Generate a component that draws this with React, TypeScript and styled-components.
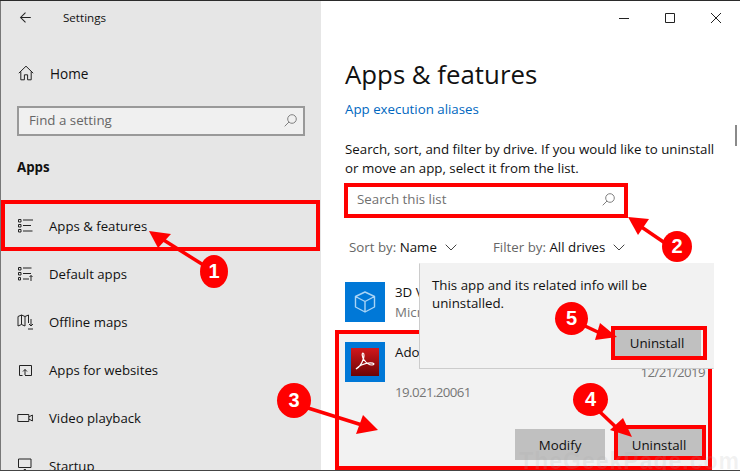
import styled, { createGlobalStyle } from 'styled-components'

const GlobalStyle = createGlobalStyle`
    html, body {
        margin: 0;
        padding: 0;
        background: #fff;
    }
    body {
        font-family: "Open Sans", "Noto Sans", "Liberation Sans", sans-serif;
        color: #111;
    }
`

const Window = styled.div`
    position: relative;
    display: flex;
    width: 740px;
    height: 471px;
    box-sizing: border-box;
    overflow: hidden;
    background: #fff;
    border-top: 1px solid #2b2b2b;
    border-bottom: 1px solid #444;
`

const Sidebar = styled.aside`
    width: 321px;
    flex-shrink: 0;
    box-sizing: border-box;
    border-left: 1px solid #777;
    background: #e6e6e6;
    display: flex;
    flex-direction: column;
    & > * {
        flex-shrink: 0;
    }
`

const SideHeader = styled.div`
    display: flex;
    align-items: center;
    height: 33px;
    padding-left: 18px;
    gap: 31px;
    font-size: 11.6px;
`

const HomeRow = styled.div`
    display: flex;
    align-items: center;
    gap: 16px;
    height: 48px;
    margin-top: 15px;
    padding-left: 17px;
    font-size: 13.6px;
`

const FindBox = styled.div`
    display: flex;
    align-items: center;
    justify-content: space-between;
    box-sizing: border-box;
    height: 30px;
    width: 288px;
    margin: 9px 0 0 16px;
    padding: 0 6px 2px 10px;
    border: 2px solid #999;
    background: #f0f0f0;
    color: #666;
    font-size: 13.3px;
`

const SectionTitle = styled.div`
    height: 30px;
    line-height: 30px;
    margin: 16px 0 20px 16px;
    font-size: 13.3px;
    font-weight: 700;
`

const NavRow = styled.div<{ $active?: boolean }>`
    position: relative;
    display: flex;
    align-items: center;
    gap: 16px;
    height: 48px;
    padding-left: 16px;
    font-size: 13.2px;
    &::before {
        content: "";
        display: ${p => (p.$active ? 'block' : 'none')};
        position: absolute;
        left: 0;
        top: 10px;
        width: 4px;
        height: 25px;
        background: #0078d7;
    }
`

const Main = styled.main`
    flex: 1;
    display: flex;
    flex-direction: column;
    padding-left: 24px;
    min-width: 0;
`

const WindowControls = styled.div`
    display: flex;
    justify-content: flex-end;
    height: 33px;
    margin-left: -24px;
    padding-right: 1px;
`

const ControlButton = styled.div`
    width: 46px;
    display: flex;
    align-items: center;
    justify-content: center;
`

const Heading = styled.h1`
    margin: 20px 0 0;
    height: 40px;
    line-height: 40px;
    font-size: 25.8px;
    font-weight: 400;
    color: #111;
`

const AliasLink = styled.div`
    margin-top: 5px;
    height: 20px;
    line-height: 20px;
    font-size: 13.3px;
    color: #0067c0;
`

const Description = styled.p`
    margin: 21px 0 0;
    width: 380px;
    line-height: 19px;
    font-size: 13.3px;
`

const SearchField = styled.div`
    display: flex;
    align-items: center;
    justify-content: space-between;
    box-sizing: border-box;
    width: 281px;
    height: 32px;
    margin-top: 7px;
    padding: 0 9px 4px 10px;
    border: 2px solid #999;
    color: #707070;
    font-size: 13.3px;
`

const SortRow = styled.div`
    display: flex;
    align-items: center;
    height: 20px;
    margin-top: 20px;
    padding-left: 4px;
    font-size: 13.3px;
`

const SortControl = styled.div<{ $width: number }>`
    display: flex;
    align-items: center;
    gap: 8px;
    width: ${p => p.$width}px;
`

const SortLabel = styled.span`
    color: #666;
`

const AppRow = styled.div`
    display: flex;
    gap: 10px;
    height: 40px;
    margin-top: 25px;
    padding-bottom: 10px;
`

const AppIcon = styled.div`
    width: 40px;
    height: 40px;
    flex-shrink: 0;
    background: #0078d7;
    display: flex;
    align-items: center;
    justify-content: center;
`

const AppText = styled.div`
    display: flex;
    flex-direction: column;
    flex: 1;
    font-size: 13.3px;
    line-height: 20px;
`

const AppMuted = styled.div`
    color: #767676;
`

const SelectedRow = styled.div`
    display: flex;
    flex-direction: column;
    box-sizing: border-box;
    width: 370px;
    height: 135px;
    margin-left: -7px;
    padding: 10px 5px 0 7px;
    background: #f2f2f2;
`

const SelectedTop = styled.div`
    display: flex;
    gap: 10px;
    height: 60px;
`

const Version = styled(AppMuted)`
    margin-top: 20px;
    letter-spacing: -0.6px;
`

const DateText = styled(AppMuted)`
    margin: 20px -2px 0 0;
    font-size: 13.3px;
    line-height: 20px;
    letter-spacing: -0.6px;
`

const ButtonRow = styled.div`
    display: flex;
    justify-content: flex-end;
    gap: 10px;
    margin-top: 27px;
`

const GrayButton = styled.div<{ $width: number }>`
    display: flex;
    align-items: center;
    justify-content: center;
    width: ${p => p.$width}px;
    height: 31px;
    background: #c0c0c0;
    font-size: 13.3px;
`

const Flyout = styled.div`
    position: absolute;
    left: 419px;
    top: 262px;
    width: 295px;
    height: 106px;
    box-sizing: border-box;
    padding: 12px 12px 0 12px;
    background: #f2f2f2;
    border: 1px solid #ccc;
    border-top-color: #f2f2f2;
    border-right-color: #f2f2f2;
    font-size: 13.3px;
    line-height: 18px;
    display: flex;
    flex-direction: column;
`

const FlyoutButton = styled(GrayButton)`
    height: 27px;
    align-self: flex-end;
    margin: 17px 0 0 0;
`

const Scrollbar = styled.div`
    position: absolute;
    right: 3px;
    top: 124px;
    width: 2px;
    height: 21px;
    background: #8a8a8a;
`

const RedFrame = styled.div<{ $x: number; $y: number; $w: number; $h: number; $t?: number }>`
    position: absolute;
    left: ${p => p.$x}px;
    top: ${p => p.$y - 1}px;
    width: ${p => p.$w}px;
    height: ${p => p.$h}px;
    box-sizing: border-box;
    border: ${p => p.$t ?? 4}px solid #f00;
`

const ArrowLayer = styled.svg`
    position: absolute;
    left: 0;
    top: -1px;
    width: 740px;
    height: 471px;
    pointer-events: none;
`

const Badge = styled.div<{ $x: number; $y: number; $w: number; $h: number }>`
    position: absolute;
    left: ${p => p.$x - p.$w / 2}px;
    top: ${p => p.$y - p.$h / 2 - 1}px;
    width: ${p => p.$w}px;
    height: ${p => p.$h}px;
    border-radius: 50%;
    background: #f00;
    color: #fff;
    display: flex;
    align-items: center;
    justify-content: center;
    font-family: "Liberation Sans", sans-serif;
    font-size: 20px;
    font-weight: 700;
`

const Watermark = styled.div`
    position: absolute;
    right: 0;
    bottom: -5px;
    font-family: "Liberation Sans", sans-serif;
    font-size: 23px;
    font-weight: 700;
    letter-spacing: 1px;
    color: rgba(170, 170, 170, 0.16);
    white-space: nowrap;
`

type IconProps = { children: React.ReactNode; size?: number }

function Glyph({ children, size = 16 }: IconProps) {
    return (
        <svg width={size} height={size} viewBox="0 0 16 16" fill="none" stroke="#222" strokeWidth="1" style={{ flexShrink: 0 }}>
            {children}
        </svg>
    )
}

const BackIcon = () => (
    <Glyph size={13}>
        <path d="M14.5 8H2M8 2 2 8l6 6" strokeWidth="1.3" />
    </Glyph>
)

const HomeIcon = () => (
    <Glyph>
        <path d="M.8 8.200 8 1.200l7.200 7M2.800 6.500v8.300h3.600v-5h3.200v5h3.600V6.500" />
    </Glyph>
)

const SearchIcon = () => (
    <svg width="13" height="13" viewBox="0 0 13 13" fill="none" stroke="#808080" strokeWidth="1">
        <circle cx="8" cy="5" r="4.300" />
        <path d="M5 8 .7 12.300" />
    </svg>
)

const ListIcon = () => (
    <Glyph>
        <path d="M1.500 1.500h2.500V4H1.500zM1.500 6.500h2.500V9H1.500zM1.500 11.500h2.500V14H1.500zM6 2h10.500M6 7.500h8M6 13h9.500" />
    </Glyph>
)

const DefaultAppsIcon = () => (
    <Glyph>
        <path d="M1.500 1.500h2.500V4H1.500zM1.500 6.500h2.500V9H1.500zM1.500 11.500h2V14h-2zM6 2h8.500M6 7.500h8M6 13h6M14 15V9.500M12.500 11l1.500-1.500 1.500 1.500" />
    </Glyph>
)

const MapIcon = () => (
    <Glyph>
        <path d="M1 2.500 4.500 1 8 2.500 11.500 1v8M1 2.500v9.500l3.500-1.500L8 12M4.500 1v9.500M8 2.500V12M14 5v7M12 10l2 2 2-2M11 15h5" />
    </Glyph>
)

const WebsiteIcon = () => (
    <Glyph>
        <path d="M5.500 13.500H2.500v-10h12v10H8M8 13V7.500M6 9.500l2-2 2 2" />
    </Glyph>
)

const VideoIcon = () => (
    <Glyph>
        <path d="M.8 4.500h11v7h-11zM11.800 7l3.600-2v6l-3.600-2" />
    </Glyph>
)

const StartupIcon = () => (
    <Glyph>
        <path d="M1.500 1h12.500v8.500H1.500zM7.800 15V11M5.800 13l2-2 2 2M4 15.500h7.500" />
    </Glyph>
)

const ChevronIcon = () => (
    <svg width="12" height="7" viewBox="0 0 12 7" fill="none" stroke="#444" strokeWidth="1">
        <path d="M.7.700 6 6l5.300-5.300" />
    </svg>
)

const CubeIcon = () => (
    <svg width="24" height="24" viewBox="0 0 24 24" fill="none" stroke="#a9d4f5" strokeWidth="1.4" strokeLinejoin="round">
        <path d="M12 2 21.500 6.500V17L12 22 2.500 17V6.500zM2.500 6.500 12 11.500l9.500-5M12 11.500V22" />
    </svg>
)

const AcrobatIcon = () => (
    <svg width="30" height="30" viewBox="0 0 30 30">
        <defs>
            <linearGradient id="acrobat" x1="0" y1="0" x2="0" y2="1">
                <stop offset="0" stopColor="#d2181c" />
                <stop offset="1" stopColor="#6b0405" />
            </linearGradient>
        </defs>
        <rect x="1" y="1" width="28" height="28" fill="url(#acrobat)" />
        <path
            d="M6 22c3-1.500 6-6 7.500-10.500.6-2 .8-5.500-.5-5.500s-1 3.500.8 6.500c2 3 5 5.500 8.200 5.500 2 0 2.500-1.300 1-1.800-3-.8-8 .3-11.500 1.800-2 .8-4.500 3-5.500 4z"
            fill="none"
            stroke="#fff"
            strokeWidth="1.200"
        />
    </svg>
)

const arrows = [
    { line: '205,266 162,239', head: '149,231 171,234 158,248' },
    { line: '665,243 640,226', head: '628,217 649,219 638,235' },
    { line: '308,408 362,425', head: '378,430 363,415 356,434' },
    { line: '600,412 620,431', head: '632,437 610,430 623,418' },
    { line: '585,326 602,334', head: '617,337 600,323 595,340' },
]

export default function App() {
    return (
        <>
            <GlobalStyle />
            <Window>
                <Sidebar>
                    <SideHeader>
                        <BackIcon />
                        <span>Settings</span>
                    </SideHeader>
                    <HomeRow>
                        <HomeIcon />
                        <span>Home</span>
                    </HomeRow>
                    <FindBox>
                        <span>Find a setting</span>
                        <SearchIcon />
                    </FindBox>
                    <SectionTitle>Apps</SectionTitle>
                    <NavRow $active>
                        <ListIcon />
                        <span>Apps &amp; features</span>
                    </NavRow>
                    <NavRow>
                        <DefaultAppsIcon />
                        <span>Default apps</span>
                    </NavRow>
                    <NavRow>
                        <MapIcon />
                        <span>Offline maps</span>
                    </NavRow>
                    <NavRow>
                        <WebsiteIcon />
                        <span>Apps for websites</span>
                    </NavRow>
                    <NavRow>
                        <VideoIcon />
                        <span>Video playback</span>
                    </NavRow>
                    <NavRow>
                        <StartupIcon />
                        <span>Startup</span>
                    </NavRow>
                </Sidebar>

                <Main>
                    <WindowControls>
                        <ControlButton>
                            <svg width="10" height="10" viewBox="0 0 10 10" stroke="#222"><path d="M0 5.500h10" /></svg>
                        </ControlButton>
                        <ControlButton>
                            <svg width="10" height="10" viewBox="0 0 10 10" stroke="#222" fill="none"><path d="M.5.500h9v9h-9z" /></svg>
                        </ControlButton>
                        <ControlButton>
                            <svg width="10" height="10" viewBox="0 0 10 10" stroke="#222"><path d="m0 0 10 10M10 0 0 10" /></svg>
                        </ControlButton>
                    </WindowControls>
                    <Heading>Apps &amp; features</Heading>
                    <AliasLink>App execution aliases</AliasLink>
                    <Description>
                        Search, sort, and filter by drive. If you would like to uninstall or move an app, select it from the list.
                    </Description>
                    <SearchField>
                        <span>Search this list</span>
                        <SearchIcon />
                    </SearchField>
                    <SortRow>
                        <SortControl $width={144}>
                            <span><SortLabel>Sort by:</SortLabel> Name</span>
                            <ChevronIcon />
                        </SortControl>
                        <SortControl $width={160}>
                            <span><SortLabel>Filter by:</SortLabel> All drives</span>
                            <ChevronIcon />
                        </SortControl>
                    </SortRow>
                    <AppRow>
                        <AppIcon><CubeIcon /></AppIcon>
                        <AppText>
                            <div>3D Viewer</div>
                            <AppMuted>Microsoft Corporation</AppMuted>
                        </AppText>
                    </AppRow>
                    <SelectedRow>
                        <SelectedTop>
                            <AppIcon><AcrobatIcon /></AppIcon>
                            <AppText>
                                <div>Adobe Acrobat Reader DC</div>
                                <Version>19.021.20061</Version>
                            </AppText>
                            <DateText>12/21/2019</DateText>
                        </SelectedTop>
                        <ButtonRow>
                            <GrayButton $width={90}>Modify</GrayButton>
                            <GrayButton $width={88}>Uninstall</GrayButton>
                        </ButtonRow>
                    </SelectedRow>
                </Main>

                <Scrollbar />
                <RedFrame $x={335} $y={330} $w={377} $h={140} />
                <Flyout>
                    <div>This app and its related info will be uninstalled.</div>
                    <FlyoutButton $width={88}>Uninstall</FlyoutButton>
                </Flyout>
                <RedFrame $x={1} $y={200} $w={319} $h={51} />
                <RedFrame $x={344} $y={183} $w={284} $h={35} />
                <RedFrame $x={614} $y={425} $w={92} $h={35} />
                <RedFrame $x={611} $y={326} $w={96} $h={34} />

                <ArrowLayer viewBox="0 0 740 471">
                    {arrows.map(a => (
                        <g key={a.head}>
                            <polyline points={a.line} stroke="#f00" strokeWidth="3.500" fill="none" />
                            <polygon points={a.head} fill="#f00" />
                        </g>
                    ))}
                </ArrowLayer>
                <Badge $x={214} $y={271.5} $w={28} $h={33}>1</Badge>
                <Badge $x={677} $y={246} $w={30} $h={31}>2</Badge>
                <Badge $x={294} $y={400} $w={34} $h={35}>3</Badge>
                <Badge $x={590.5} $y={399.5} $w={35} $h={33}>4</Badge>
                <Badge $x={571.5} $y={318} $w={33} $h={33}>5</Badge>
                <Watermark>TheGeekPage.com</Watermark>
            </Window>
        </>
    )
}
